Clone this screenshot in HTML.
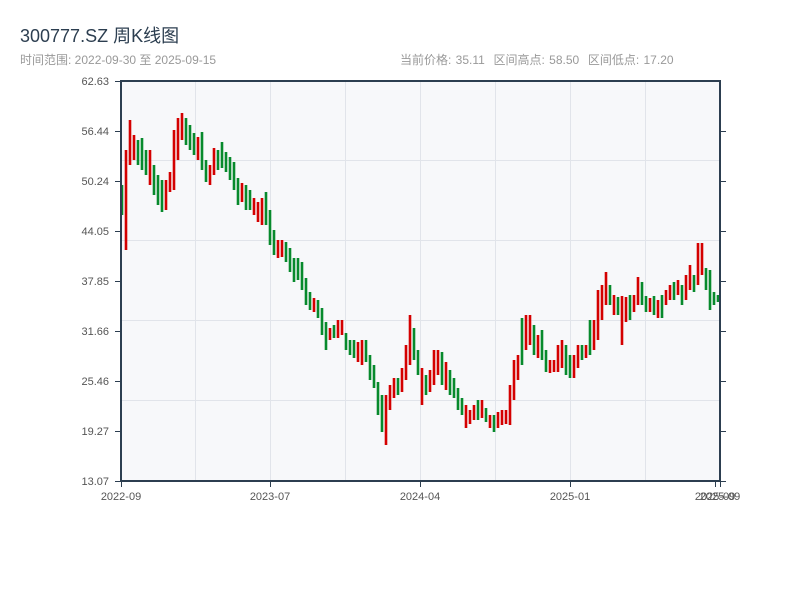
<!DOCTYPE html>
<html><head><meta charset="utf-8"><style>
html,body{margin:0;padding:0;background:#fff;width:800px;height:600px;overflow:hidden;font-family:"Liberation Sans","Noto Sans CJK SC",sans-serif}
.t{position:absolute;left:20px;top:22px;font-size:18px;color:#2c3e50}
.s{position:absolute;left:20px;top:51px;font-size:12px;color:#999}
.r{position:absolute;left:400px;top:51px;font-size:12px;color:#999;word-spacing:1px}
svg{position:absolute;left:0;top:0}
</style></head><body>
<div class="t">300777.SZ 周K线图</div>
<div class="s">时间范围: 2022-09-30 至 2025-09-15</div>
<div class="r">当前价格: 35.11&nbsp;&nbsp;区间高点: 58.50&nbsp;&nbsp;区间低点: 17.20</div>
<svg width="800" height="600" xmlns="http://www.w3.org/2000/svg">
<rect x="121" y="81" width="599" height="400" fill="#f7f8fa"/>
<g stroke="#e1e4ea" stroke-width="1">
<line x1="195.5" y1="81" x2="195.5" y2="481"/><line x1="270.5" y1="81" x2="270.5" y2="481"/>
<line x1="345.5" y1="81" x2="345.5" y2="481"/><line x1="420.5" y1="81" x2="420.5" y2="481"/>
<line x1="495.5" y1="81" x2="495.5" y2="481"/><line x1="570.5" y1="81" x2="570.5" y2="481"/>
<line x1="645.5" y1="81" x2="645.5" y2="481"/>
<line x1="121" y1="160.5" x2="720" y2="160.5"/><line x1="121" y1="240.5" x2="720" y2="240.5"/>
<line x1="121" y1="320.5" x2="720" y2="320.5"/><line x1="121" y1="400.5" x2="720" y2="400.5"/>
</g>
<path stroke="#d40000" stroke-width="2.6" fill="none" d="M126 150V250M130 120V165M134 135V160M150 150V185M166 180V210M170 172V192M174 130V190M178 118V160M182 113V140M198 137V160M210 165V185M214 148V175M242 183V202M254 198V215M258 202V222M262 198V225M278 240V258M282 240V257M314 298V312M330 328V340M338 320V338M342 320V335M358 342V362M362 340V365M386 395V445M390 385V410M394 378V398M402 368V392M406 345V380M410 315V365M422 368V405M430 370V392M434 350V385M438 350V375M446 362V390M466 405V428M470 410V424M474 405V420M482 400V418M490 415V428M498 412V428M502 410V425M506 410V424M510 385V425M514 360V400M518 355V380M526 315V350M530 315V345M538 335V358M550 360V373M554 360V372M558 345V372M562 340V368M574 355V378M578 345V368M586 345V358M594 320V350M598 290V340M602 285V320M606 272V305M614 295V315M622 296V345M626 297V322M634 295V312M638 277V305M650 298V312M658 300V318M666 290V305M670 285V300M678 280V295M686 275V300M690 265V290M698 243V285M702 243V275"/>
<path stroke="#078a2c" stroke-width="2.6" fill="none" d="M122 185V215M138 140V165M142 138V170M146 150V175M154 165V195M158 175V205M162 180V212M186 118V145M190 125V150M194 133V155M202 132V170M206 160V182M218 150V170M222 142V168M226 152V172M230 157V180M234 162V190M238 178V205M246 185V210M250 190V210M266 192V225M270 210V245M274 230V255M286 242V262M290 248V272M294 258V282M298 258V280M302 262V290M306 278V305M310 292V310M318 300V318M322 308V335M326 322V350M334 325V338M346 333V350M350 340V355M354 340V358M366 340V362M370 355V380M374 365V388M378 382V415M382 395V432M398 378V395M414 328V360M418 350V375M426 375V395M442 352V385M450 370V395M454 378V398M458 388V410M462 398V415M478 400V420M486 408V422M494 415V432M522 318V365M534 325V355M542 330V360M546 350V372M566 345V375M570 355V378M582 345V360M590 320V355M610 285V305M618 297V315M630 295V320M642 282V305M646 296V312M654 296V315M662 295V318M674 282V300M682 285V305M694 275V292M706 268V290M710 270V310M714 292V305M718 295V302"/>
<g stroke="#2c3e50" stroke-width="2" fill="none">
<line x1="121" y1="80" x2="121" y2="482"/><line x1="120" y1="481" x2="721" y2="481"/>
<line x1="120" y1="81" x2="721" y2="81"/><line x1="720" y1="80" x2="720" y2="482"/>
</g>
<g stroke="#2c3e50" stroke-width="1">
<line x1="115" y1="81.5" x2="121" y2="81.5"/><line x1="115" y1="131.5" x2="121" y2="131.5"/>
<line x1="115" y1="181.5" x2="121" y2="181.5"/><line x1="115" y1="231.5" x2="121" y2="231.5"/>
<line x1="115" y1="281.5" x2="121" y2="281.5"/><line x1="115" y1="331.5" x2="121" y2="331.5"/>
<line x1="115" y1="381.5" x2="121" y2="381.5"/><line x1="115" y1="431.5" x2="121" y2="431.5"/>
<line x1="115" y1="481.5" x2="121" y2="481.5"/>
<line x1="720" y1="131.5" x2="726" y2="131.5"/><line x1="720" y1="181.5" x2="726" y2="181.5"/>
<line x1="720" y1="231.5" x2="726" y2="231.5"/><line x1="720" y1="281.5" x2="726" y2="281.5"/>
<line x1="720" y1="331.5" x2="726" y2="331.5"/><line x1="720" y1="381.5" x2="726" y2="381.5"/>
<line x1="720" y1="431.5" x2="726" y2="431.5"/><line x1="720" y1="481.5" x2="726" y2="481.5"/>
<line x1="121.5" y1="481" x2="121.5" y2="487"/><line x1="270.5" y1="481" x2="270.5" y2="487"/>
<line x1="420.5" y1="481" x2="420.5" y2="487"/><line x1="570.5" y1="481" x2="570.5" y2="487"/>
<line x1="715.5" y1="481" x2="715.5" y2="487"/><line x1="720.5" y1="481" x2="720.5" y2="487"/>
</g>
<g font-size="11" fill="#555" text-anchor="end" font-family="Liberation Sans,sans-serif">
<text x="109" y="85">62.63</text><text x="109" y="135">56.44</text><text x="109" y="185">50.24</text>
<text x="109" y="235">44.05</text><text x="109" y="285">37.85</text><text x="109" y="335">31.66</text>
<text x="109" y="385">25.46</text><text x="109" y="435">19.27</text><text x="109" y="485">13.07</text>
</g>
<g font-size="11" fill="#555" text-anchor="middle" font-family="Liberation Sans,sans-serif">
<text x="121" y="500">2022-09</text><text x="270" y="500">2023-07</text><text x="420" y="500">2024-04</text>
<text x="570" y="500">2025-01</text><text x="715" y="500">2025-09</text><text x="720" y="500">2025-09</text>
</g>
</svg>
</body></html>
